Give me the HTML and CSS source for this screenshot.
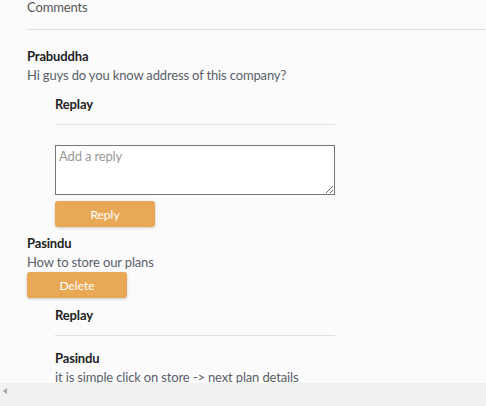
FILE: index.html
```
<!DOCTYPE html>
<html>
<head>
<meta charset="utf-8">
<link rel="stylesheet" href="styles.css">
</head>
<body>
<div class="page">
  <div class="title">Comments</div>
  <div class="divider"></div>

  <div class="comment">
    <div class="author">Prabuddha</div>
    <div class="text">Hi guys do you know address of this company?</div>
    <div class="replies">
      <div class="replies-title">Replay</div>
      <div class="rule"></div>
      <textarea class="reply-input" placeholder="Add a reply"></textarea>
      <button class="btn btn-reply">Reply</button>
    </div>
  </div>

  <div class="comment comment-second">
    <div class="author">Pasindu</div>
    <div class="text">How to store our plans</div>
    <button class="btn btn-delete">Delete</button>
    <div class="replies replies-list">
      <div class="replies-title">Replay</div>
      <div class="rule rule-list"></div>
      <div class="reply">
        <div class="author">Pasindu</div>
        <div class="text">it is simple click on store -&gt; next plan details</div>
      </div>
    </div>
  </div>
</div>
<div class="hscroll"><span class="arrow"></span></div>
</body>
</html>
```
FILE: styles.css
```
html, body {
  margin: 0;
  padding: 0;
  height: 100%;
  overflow: hidden;
}
body {
  background: #fbfbfb;
  font-family: Lato, "Open Sans", sans-serif;
  font-size: 13px;
  letter-spacing: -0.15px;
  color: #555;
}
.page {
  padding-left: 27px;
}
.title {
  line-height: 14px;
  color: #555;
}
.divider {
  height: 1px;
  background: #e0e0e0;
  margin-top: 15px;
}
.comment {
  margin-top: 17px;
}
.author {
  font-weight: 700;
  color: #222;
  line-height: 19px;
}
.text {
  line-height: 19px;
  color: #5a5f6a;
}
.replies {
  padding-left: 28px;
  width: 280px;
  margin-top: 10px;
}
.replies-title {
  font-weight: 700;
  color: #222;
  line-height: 19px;
}
.rule {
  height: 1px;
  background: #e0e0e0;
  margin-top: 10px;
}
.reply-input {
  display: block;
  box-sizing: border-box;
  width: 280px;
  height: 50px;
  margin-top: 20px;
  border: 1px solid #767676;
  background: #fff;
  font-family: Lato, "Open Sans", sans-serif;
  font-size: 13px;
  letter-spacing: -0.15px;
  padding: 2px 3px;
  resize: both;
}
.reply-input::placeholder {
  color: #9a9a9a;
}
.btn {
  display: block;
  width: 100px;
  height: 26px;
  border: 0;
  border-radius: 3px;
  background: #e8a855;
  color: #fff;
  font-family: Lato, "Open Sans", sans-serif;
  font-size: 12px;
  box-shadow: 0 1px 3px rgba(0, 0, 0, 0.2);
  padding: 0;
}
.btn-reply {
  margin-top: 6px;
}
.comment-second {
  margin-top: 7px;
}
.replies-list {
  margin-top: 8px;
}
.rule-list {
  margin-top: 10px;
}
.reply {
  margin-top: 13px;
}
.hscroll {
  position: fixed;
  left: 0;
  right: 0;
  bottom: 0;
  height: 23px;
  background: #f1f1f1;
}
.arrow {
  position: absolute;
  left: 3px;
  top: 5px;
  width: 0;
  height: 0;
  border-top: 3px solid transparent;
  border-bottom: 3px solid transparent;
  border-right: 4px solid #a3a3a3;
}
```
